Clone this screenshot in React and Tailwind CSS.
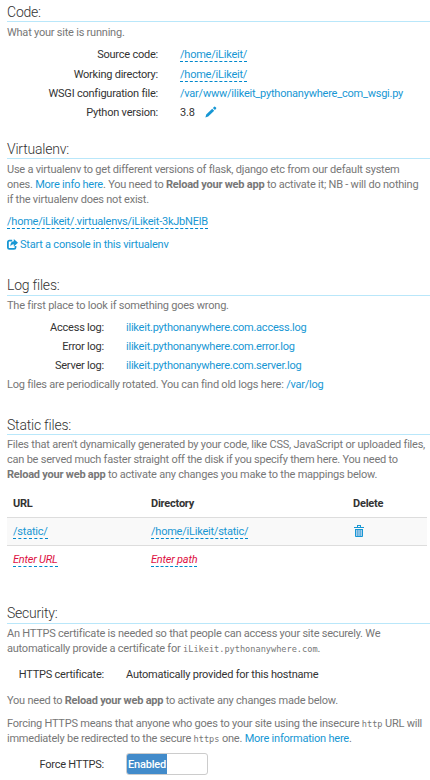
import React from "react";

function Heading({ children, low }) {
  return (
    <h2 className={`h-[20px] border-b border-[#b9e7fa] font-['Roboto_Light','Roboto',sans-serif] text-[14px] font-light tracking-[-0.21px] text-[#333] ${low ? "leading-[21px]" : "leading-[19px]"}`}>
      {children}
    </h2>
  );
}

function Link({ children, editable }) {
  return (
    <a className={`text-[#1797d4] ${editable ? "inline-block h-[15px] border-b border-dashed border-[#0088cc] leading-[15px]" : ""}`}>
      {children}
    </a>
  );
}

function Row({ label, children, wide, className = "h-[19px]" }) {
  return (
    <div className={`flex items-center text-[#333] ${className}`}>
      <div className={`shrink-0 text-right ${wide ? "w-[151px]" : "w-[97px]"}`}>{label}</div>
      <div className="ml-[22px] flex items-center">{children}</div>
    </div>
  );
}

function Pencil() {
  return (
    <svg className="mb-[2px] ml-[10px] h-[12px] w-[12px]" viewBox="0 0 12 12" fill="#1797d4">
      <path d="M0.4 11.4 1.2 8.6 7.2 2.7 9.2 4.7 3.2 10.6zM7.9 2 9.2.8Q9.8.3 10.4.9L11 1.5Q11.6 2.1 11.1 2.7L9.9 4z" />
    </svg>
  );
}

function Share() {
  return (
    <svg className="h-[11px] w-[11px]" viewBox="0 0 11 11" fill="none" stroke="#1797d4">
      <path strokeWidth="1.8" d="M5.2 1.7H2.4Q.9 1.7.9 3.2V8.4Q.9 9.9 2.4 9.9H7Q8.5 9.9 8.5 8.4V7" />
      <path fill="#1797d4" stroke="none" d="M6.8 0 11 3.7 6.8 7.4V5.3Q4.6 5.2 3.5 7.4 3 2.6 6.8 2.2z" />
    </svg>
  );
}

function Trash() {
  return (
    <svg className="h-[12px] w-[10px]" viewBox="0 0 10 12" fill="none" stroke="#1797d4">
      <path fill="#a9cdea" stroke="none" d="M1.5 4H8.5V11.5H1.5z" />
      <path d="M0 2.5H10M3 .5H7M3.5 .5V2M6.5 .5V2M1.5 4V11.5H8.5V4M1 4.5H9" />
      <path strokeWidth=".7" d="M3.8 4.5V11M6.2 4.5V11" />
    </svg>
  );
}

const Reload = () => <b className="font-bold">Reload your web app</b>;
const Code = ({ children }) => <code className="font-['DejaVu_Sans_Mono',monospace] text-[8.6px] leading-none tracking-normal">{children}</code>;

export default function App() {
  return (
    <main className="h-[780px] w-[430px] overflow-hidden whitespace-nowrap bg-white pl-[7px] font-['Roboto',sans-serif] text-[11px] leading-[15px] tracking-[-0.225px] text-[#777]">
      <section className="h-[137px] pt-[2px]">
        <Heading low>Code:</Heading>
        <p className="mt-[3px]">What your site is running.</p>
        <div className="mt-[4px]">
          <Row wide label="Source code:" className="h-[20px]"><Link editable>/home/iLikeit/</Link></Row>
          <Row wide label="Working directory:" className="h-[20px]"><Link editable>/home/iLikeit/</Link></Row>
          <Row wide label="WSGI configuration file:"><Link>/var/www/ilikeit_pythonanywhere_com_wsgi.py</Link></Row>
          <Row wide label="Python version:">3.8<Pencil /></Row>
        </div>
      </section>

      <section className="h-[137px] pt-[2px]">
        <Heading low>Virtualenv:</Heading>
        <p className="mt-[3px]">
          Use a virtualenv to get different versions of flask, django etc from our default system<br />
          ones. <Link>More info here</Link>. You need to <Reload /> to activate it; NB - will do nothing<br />
          if the virtualenv does not exist.
        </p>
        <p className="mt-[7px]"><Link editable>/home/iLikeit/.virtualenvs/iLikeit-3kJbNElB</Link></p>
        <p className="mt-[8px] flex items-center gap-[2px] text-[#1797d4]">
          <Share />
          <span>Start a console in this virtualenv</span>
        </p>
      </section>

      <section className="h-[139px] pt-[2px]">
        <Heading>Log files:</Heading>
        <p className="mt-[2px]">The first place to look if something goes wrong.</p>
        <div className="mt-[5px]">
          <Row label="Access log:"><Link>ilikeit.pythonanywhere.com.access.log</Link></Row>
          <Row label="Error log:"><Link>ilikeit.pythonanywhere.com.error.log</Link></Row>
          <Row label="Server log:"><Link>ilikeit.pythonanywhere.com.server.log</Link></Row>
        </div>
        <p className="mt-[2px]">Log files are periodically rotated. You can find old logs here: <Link>/var/log</Link></p>
      </section>

      <section className="h-[189px] pt-[2px]">
        <Heading low>Static files:</Heading>
        <p className="mt-[2px]">
          Files that aren't dynamically generated by your code, like CSS, JavaScript or uploaded files,<br />
          can be served much faster straight off the disk if you specify them here. You need to<br />
          <Reload /> to activate any changes you make to the mappings below.
        </p>
        <div className="mt-[7px] w-[420px]">
          <div className="grid h-[28px] grid-cols-[138px_202px_1fr] items-center pl-[6px] font-bold text-[#333]">
            <span>URL</span><span>Directory</span><span>Delete</span>
          </div>
          <div className="grid h-[28px] grid-cols-[138px_202px_1fr] items-center border-t border-[#ddd] bg-[#f9f9f9] pl-[6px]">
            <span><Link editable>/static/</Link></span>
            <span><Link editable>/home/iLikeit/static/</Link></span>
            <span className="pb-[2px] pl-[1px]"><Trash /></span>
          </div>
          <div className="grid h-[28px] grid-cols-[138px_202px_1fr] items-center border-t border-[#ddd] pl-[6px] italic text-[#dd1144]">
            <span><span className="inline-block h-[15px] border-b border-dashed border-[#0088cc]">Enter URL</span></span>
            <span><span className="inline-block h-[15px] border-b border-dashed border-[#0088cc]">Enter path</span></span>
          </div>
        </div>
      </section>

      <section className="pt-[2px]">
        <Heading>Security:</Heading>
        <p className="mt-[2px]">
          An HTTPS certificate is needed so that people can access your site securely. We<br />
          automatically provide a certificate for <Code>iLikeit.pythonanywhere.com</Code>.
        </p>
        <Row label="HTTPS certificate:" className="mt-[9px] h-[19px]">Automatically provided for this hostname</Row>
        <p className="mt-[9px]">You need to <Reload /> to activate any changes made below.</p>
        <p className="mt-[8px]">
          Forcing HTTPS means that anyone who goes to your site using the insecure <Code>http</Code> URL will<br />
          immediately be redirected to the secure <Code>https</Code> one. <Link>More information here</Link>.
        </p>
        <Row label="Force HTTPS:" className="mt-[7px] h-[22px]">
          <div className="flex h-[22px] w-[82px] overflow-hidden rounded-[3px] border border-[#ccc]">
            <span className="flex w-[40px] items-center justify-center bg-[#428bca] font-medium text-white">Enabled</span>
          </div>
        </Row>
      </section>
    </main>
  );
}
